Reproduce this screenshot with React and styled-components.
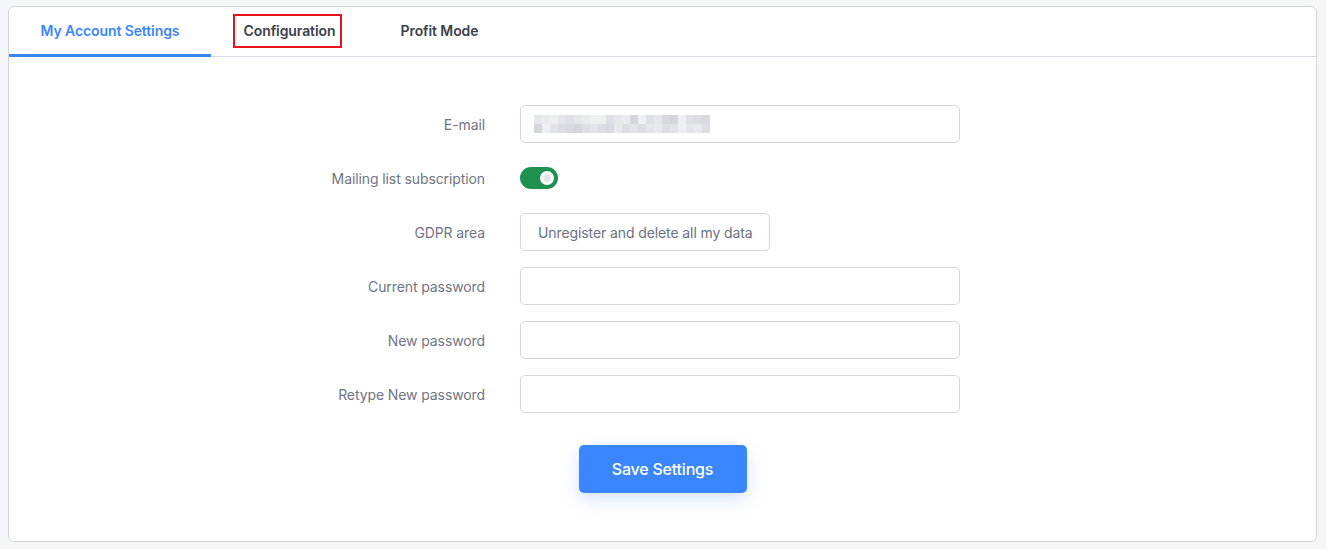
import React, { useState } from "react";
import styled, { createGlobalStyle } from "styled-components";

const GlobalStyle = createGlobalStyle`
  html, body { margin: 0; padding: 0; background: #f5f6f8; }
  body { font-family: Inter, "Noto Sans", sans-serif; }
  * { box-sizing: border-box; }
`;

const Page = styled.div`
  padding: 6px 9px 7px 8px;
`;

const Card = styled.div`
  background: #fff;
  border: 1px solid #d2d5dc;
  border-radius: 6px;
  height: 536px;
`;

const Tabs = styled.div`
  display: flex;
  border-bottom: 1px solid #d6d9df;
  height: 50px;
`;

const Tab = styled.div`
  display: flex;
  align-items: center;
  justify-content: center;
  height: 50px;
  width: ${p => p.width}px;
  margin-bottom: -1px;
  font-size: 14px;
  line-height: 18px;
  font-weight: 600;
  letter-spacing: -0.1px;
  color: ${p => (p.active ? "#3a86ff" : "#3b3f4a")};
  border-bottom: 3px solid ${p => (p.active ? "#3a86ff" : "transparent")};
  padding-top: 0;
`;

const Highlight = styled.span`
  border: 2px solid #e8131c;
  padding: 6px 5px 6px 9px;
  margin-top: 1px;
`;

const Form = styled.div`
  display: grid;
  grid-template-columns: 511px 440px;
  grid-auto-rows: 38px;
  row-gap: 16px;
  padding-top: 48px;
`;

const Label = styled.div`
  display: flex;
  align-items: center;
  justify-content: flex-end;
  padding-right: 35px;
  font-size: 14px;
  color: #6f7584;
  letter-spacing: -0.1px;
`;

const Field = styled.div`
  display: flex;
  align-items: center;
`;

const Input = styled.div`
  width: 440px;
  height: 38px;
  border: 1px solid #d3d6dc;
  border-radius: 5px;
  display: flex;
  align-items: center;
  padding-left: 13px;
`;

const Mosaic = styled.div`
  display: grid;
  grid-template-columns: repeat(22, 8px);
  grid-auto-rows: 9px;
`;

const Cell = styled.span`
  background: ${p => p.c};
`;

const Switch = styled.button`
  width: 38px;
  height: 22px;
  border-radius: 11px;
  border: none;
  background: #1e9150;
  position: relative;
  padding: 0;
  cursor: pointer;
  &::after {
    content: "";
    position: absolute;
    right: 4px;
    top: 4px;
    width: 14px;
    height: 14px;
    border-radius: 50%;
    background: radial-gradient(circle, #e4e6ec 35%, #ffffff 45%);
  }
`;

const OutlineButton = styled.button`
  height: 38px;
  padding: 0 16px 0 17px;
  border: 1px solid #d3d6dc;
  border-radius: 5px;
  background: #fff;
  font-family: Inter, "Noto Sans", sans-serif;
  font-size: 14px;
  color: #6b7180;
  letter-spacing: -0.1px;
`;

const Footer = styled.div`
  display: flex;
  justify-content: center;
  padding-top: 32px;
`;

const SaveButton = styled.button`
  width: 168px;
  height: 48px;
  border: none;
  border-radius: 5px;
  background: #3a86ff;
  color: #fff;
  font-family: Inter, "Noto Sans", sans-serif;
  font-size: 16px;
  font-weight: 500;
  letter-spacing: -0.2px;
  box-shadow: 0 6px 18px rgba(58, 134, 255, 0.22);
`;

const shades = [
  "#e6e7ea", "#dcdde1", "#eeeff1", "#d4d6da", "#e9eaec", "#dfe0e3", "#e3e4e7", "#ebebee",
  "#d9dadf", "#e5e6e9", "#f0f0f2", "#dedfe3"
];

const mosaicCells = Array.from({ length: 44 }, (_, i) => shades[(i * 7 + (i >> 2)) % shades.length]);

const rows = [
  { label: "Current password" },
  { label: "New password" },
  { label: "Retype New password" },
];

export default function App() {
  const [subscribed, setSubscribed] = useState(true);
  return (
    <>
      <GlobalStyle />
      <Page>
        <Card>
          <Tabs>
            <Tab width={202} active>My Account Settings</Tab>
            <Tab width={153}><Highlight>Configuration</Highlight></Tab>
            <Tab width={151}>Profit Mode</Tab>
          </Tabs>
          <Form>
            <Label>E-mail</Label>
            <Field>
              <Input>
                <Mosaic>
                  {mosaicCells.map((c, i) => <Cell key={i} c={c} />)}
                </Mosaic>
              </Input>
            </Field>

            <Label>Mailing list subscription</Label>
            <Field>
              <Switch aria-label="toggle" onClick={() => setSubscribed(!subscribed)} />
            </Field>

            <Label>GDPR area</Label>
            <Field>
              <OutlineButton>Unregister and delete all my data</OutlineButton>
            </Field>

            {rows.map(r => (
              <React.Fragment key={r.label}>
                <Label>{r.label}</Label>
                <Field><Input /></Field>
              </React.Fragment>
            ))}
          </Form>
          <Footer>
            <SaveButton>Save Settings</SaveButton>
          </Footer>
        </Card>
      </Page>
    </>
  );
}
